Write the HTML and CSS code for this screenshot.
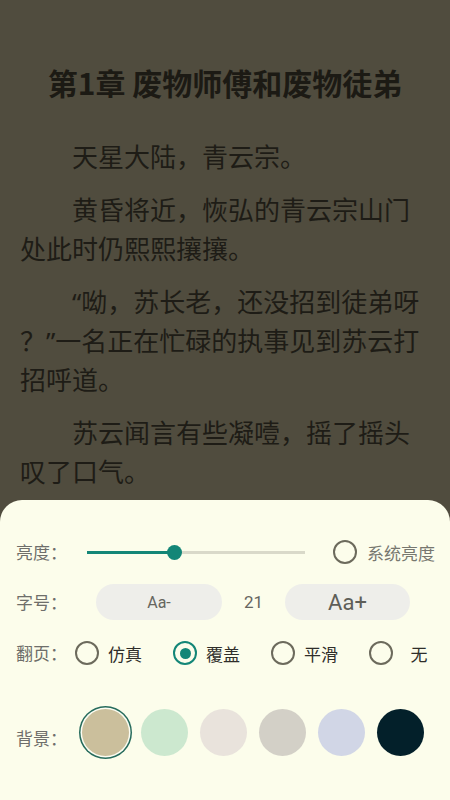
FILE: index.html
```html
<!DOCTYPE html>
<html lang="zh-CN">
<head>
<meta charset="utf-8">
<title>阅读</title>
<link rel="stylesheet" href="styles.css">
</head>
<body>
<div class="screen">
  <article class="reader">
    <h1 class="chapter-title">第1章 废物师傅和废物徒弟</h1>
    <p class="para">天星大陆，青云宗。</p>
    <p class="para">黄昏将近，恢弘的青云宗山门处此时仍熙熙攘攘。</p>
    <p class="para">“呦，苏长老，还没招到徒弟呀？”一名正在忙碌的执事见到苏云打招呼道。</p>
    <p class="para">苏云闻言有些凝噎，摇了摇头叹了口气。</p>
  </article>

  <section class="settings">
    <div class="row row-brightness">
      <span class="label">亮度：</span>
      <div class="slider">
        <div class="slider-fill" style="width:87px"></div>
        <span class="slider-thumb"></span>
        <div class="slider-rest"></div>
      </div>
      <span class="radio"></span>
      <span class="sys-label">系统亮度</span>
    </div>

    <div class="row row-font">
      <span class="label">字号：</span>
      <button class="size-btn size-minus">Aa-</button>
      <span class="size-value">21</span>
      <button class="size-btn size-plus">Aa+</button>
    </div>

    <div class="row row-turn">
      <span class="label label-turn">翻页：</span>
      <div class="option"><span class="radio"></span><span class="opt-label">仿真</span></div>
      <div class="option"><span class="radio radio-on"></span><span class="opt-label">覆盖</span></div>
      <div class="option"><span class="radio"></span><span class="opt-label">平滑</span></div>
      <div class="option"><span class="radio"></span><span class="opt-label">无</span></div>
    </div>

    <div class="row row-bg">
      <span class="label label-bg">背景：</span>
      <div class="swatches">
        <span class="swatch swatch-on" style="background:#cbbf9c"></span>
        <span class="swatch" style="background:#cce8cf"></span>
        <span class="swatch" style="background:#e9e3dc"></span>
        <span class="swatch" style="background:#d3d0c7"></span>
        <span class="swatch" style="background:#d1d6e6"></span>
        <span class="swatch" style="background:#03202a"></span>
      </div>
    </div>
  </section>
</div>
</body>
</html>
```

FILE: styles.css
```css
* { box-sizing: border-box; }

html, body {
  margin: 0;
  padding: 0;
}

body {
  width: 450px;
  height: 800px;
  overflow: hidden;
  background: #504c3e;
  font-family: "Noto Sans CJK SC", "Noto Sans", sans-serif;
}

.screen {
  width: 450px;
  height: 800px;
  display: flex;
  flex-direction: column;
}

.reader {
  flex: 1;
  overflow: hidden;
  padding: 62px 20px 0 20px;
  color: #1e1c16;
}

.chapter-title {
  margin: 0 0 36px 0;
  font-size: 30px;
  line-height: 40px;
  font-weight: 700;
  text-align: center;
  color: #1c1a14;
}

.para {
  margin: 0 0 14px 0;
  font-family: "Noto Sans", "Noto Sans CJK SC", sans-serif;
  font-size: 26px;
  line-height: 39px;
  text-indent: 2em;
  line-break: anywhere;
}

.settings {
  flex: none;
  height: 300px;
  background: #fcfdeb;
  border-radius: 22px 22px 0 0;
  padding-top: 32px;
}

.row {
  display: flex;
  align-items: center;
  height: 40px;
  padding-left: 16px;
}

.label {
  flex: none;
  width: 71px;
  font-size: 17px;
  color: #6e6e6a;
  line-height: 24px;
}

/* brightness */
.slider {
  flex: none;
  width: 218px;
  display: flex;
  align-items: center;
  height: 20px;
}

.slider-fill {
  height: 3px;
  background: #138677;
}

.slider-thumb {
  flex: none;
  width: 15px;
  height: 15px;
  border-radius: 50%;
  background: #138677;
  margin-left: -7.5px;
  margin-right: -7.5px;
  position: relative;
  z-index: 1;
}

.slider-rest {
  flex: 1;
  height: 3px;
  background: #d9d9c9;
}

.row-brightness .radio {
  margin-left: 28px;
}

.sys-label {
  margin-left: 10px;
  font-size: 17px;
  color: #77776f;
}

/* radios */
.radio {
  flex: none;
  width: 24px;
  height: 24px;
  border-radius: 50%;
  border: 2.5px solid #6c6a5c;
  display: flex;
  align-items: center;
  justify-content: center;
}

.radio-on {
  border-color: #138677;
}

.radio-on::after {
  content: "";
  width: 11px;
  height: 11px;
  border-radius: 50%;
  background: #138677;
}

/* font size */
.row-font {
  margin-top: 10px;
}

.size-btn {
  flex: none;
  height: 36px;
  border: none;
  border-radius: 18px;
  background: #eeeeea;
  font-family: Roboto, "Noto Sans", sans-serif;
  color: #666660;
  padding: 0;
  cursor: pointer;
}

.size-minus {
  width: 126px;
  margin-left: 9px;
  font-size: 16px;
}

.size-value {
  flex: none;
  width: 63px;
  text-align: center;
  font-family: Roboto, "Noto Sans", sans-serif;
  font-size: 17px;
  color: #666660;
}

.size-plus {
  width: 125px;
  font-size: 22px;
  color: #5e5e58;
}

/* page turn */
.row-turn {
  margin-top: 11px;
}

.label-turn {
  width: 59px;
}

.option {
  flex: none;
  width: 98px;
  display: flex;
  align-items: center;
}

.opt-label {
  width: 34px;
  margin-left: 9px;
  text-align: center;
  font-size: 17px;
  color: #2f2e2a;
}

/* background */
.row-bg {
  margin-top: 33px;
  height: 52px;
}

.label-bg {
  width: 66px;
  margin-top: 12px;
}

.swatches {
  display: flex;
  align-items: center;
  gap: 12px;
}

.swatch {
  flex: none;
  width: 47px;
  height: 47px;
  border-radius: 50%;
}

.swatch-on {
  box-shadow: 0 0 0 1.5px #fcfdf2, 0 0 0 3px #266b5c;
}
```
